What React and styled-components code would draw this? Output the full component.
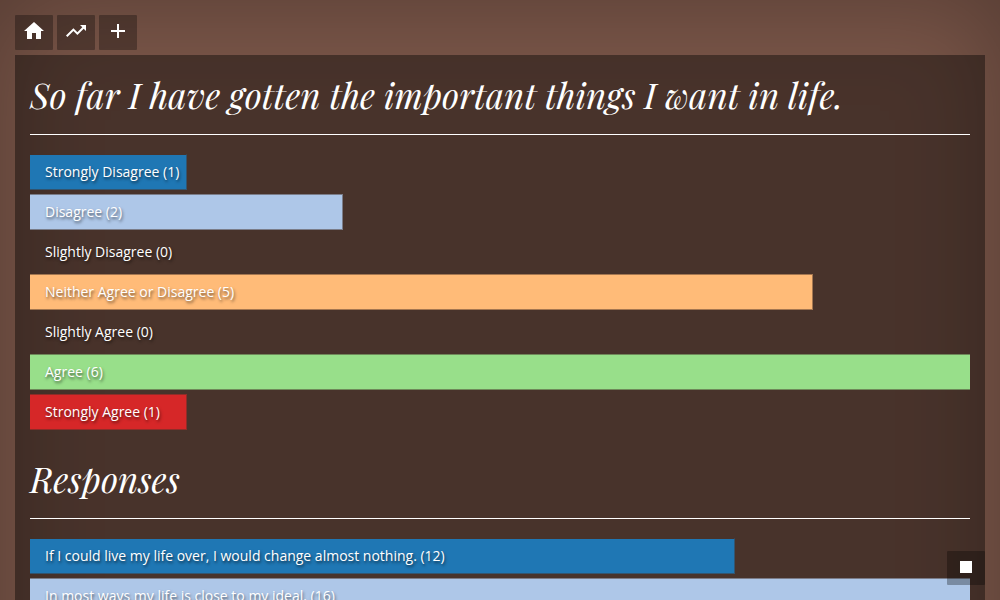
import React from "react";
import styled, { createGlobalStyle } from "styled-components";
import { MdHome, MdTrendingUp, MdAdd, MdStop } from "react-icons/md";

const GlobalStyle = createGlobalStyle`
  *, *::before, *::after { box-sizing: border-box; }
  html { scrollbar-width: none; }
  body {
    margin: 0;
    background: #795548;
    color: #fff;
    font-family: "Open Sans", sans-serif;
    font-size: 14px;
    line-height: 20px;
  }
`;

const Page = styled.div`
  min-height: 100vh;
  padding: 15px 15px 120px;
  background: #795548;
  box-shadow: inset 0 0 100px rgba(0, 0, 0, 0.3);
`;

const Toolbar = styled.nav`
  display: flex;
  gap: 4px;
  margin-bottom: 5px;
`;

const IconButton = styled.button`
  display: flex;
  width: 38px;
  height: 35px;
  padding: 4px 7px;
  border: 0;
  border-radius: 1px;
  background: rgba(0, 0, 0, 0.3);
  color: #fff;
  cursor: pointer;

  svg {
    width: 24px;
    height: 24px;
  }
`;

const StopButton = styled(IconButton)`
  position: fixed;
  right: 15px;
  bottom: 15px;
  height: 34px;
`;

const Panel = styled.main`
  padding: 15px 15px 120px;
  background: rgba(0, 0, 0, 0.4);
`;

const Section = styled.section`
  & + & {
    margin-top: 24px;
  }
`;

const Heading = styled.h1`
  margin: 0 0 20px;
  padding-bottom: 14px;
  border-bottom: 1px solid #fff;
  font: italic 400 35px/50px "Playfair Display", "Liberation Serif", serif;
`;

const Chart = styled.ul`
  display: flex;
  flex-direction: column;
  gap: 4px;
  margin: -1px 0 0;
  padding: 0;
  list-style: none;
`;

const Row = styled.li`
  display: grid;
  align-items: center;
  height: 36px;

  &:first-child > :first-child {
    border-top-color: transparent;
  }
`;

const Bar = styled.span`
  grid-area: 1 / 1;
  height: 100%;
  border: solid color-mix(in srgb, ${(p) => p.$color} 50%, transparent);
  border-width: ${(p) => (p.$full ? "1px 0" : "1px 1px 1px 0")};
  background: ${(p) => p.$color} padding-box;
`;

const Label = styled.span`
  grid-area: 1 / 1;
  padding-left: 15px;
  white-space: nowrap;
  text-shadow: 1px 2px 3px rgba(0, 0, 0, 0.6);
`;

const answers = [
  { label: "Strongly Disagree", count: 1, color: "#1f77b4" },
  { label: "Disagree", count: 2, color: "#aec7e8" },
  { label: "Slightly Disagree", count: 0, color: "#ff7f0e" },
  { label: "Neither Agree or Disagree", count: 5, color: "#ffbb78" },
  { label: "Slightly Agree", count: 0, color: "#2ca02c" },
  { label: "Agree", count: 6, color: "#98df8a" },
  { label: "Strongly Agree", count: 1, color: "#d62728" },
];

const responses = [
  { label: "If I could live my life over, I would change almost nothing.", count: 12, color: "#1f77b4" },
  { label: "In most ways my life is close to my ideal.", count: 16, color: "#aec7e8" },
];

function BarChart({ items }) {
  const max = Math.max(...items.map((item) => item.count));
  return (
    <Chart>
      {items.map(({ label, count, color }) => (
        <Row key={label}>
          {count > 0 && (
            <Bar $color={color} $full={count === max} style={{ width: `${(count / max) * 100}%` }} />
          )}
          <Label>{`${label} (${count})`}</Label>
        </Row>
      ))}
    </Chart>
  );
}

export default function App() {
  return (
    <>
      <GlobalStyle />
      <Page>
        <Toolbar>
          <IconButton aria-label="Home"><MdHome /></IconButton>
          <IconButton aria-label="Trends"><MdTrendingUp /></IconButton>
          <IconButton aria-label="Add"><MdAdd /></IconButton>
        </Toolbar>
        <Panel>
          <Section>
            <Heading>So far I have gotten the important things I want in life.</Heading>
            <BarChart items={answers} />
          </Section>
          <Section>
            <Heading as="h2">Responses</Heading>
            <BarChart items={responses} />
          </Section>
        </Panel>
      </Page>
      <StopButton aria-label="Stop"><MdStop /></StopButton>
    </>
  );
}
